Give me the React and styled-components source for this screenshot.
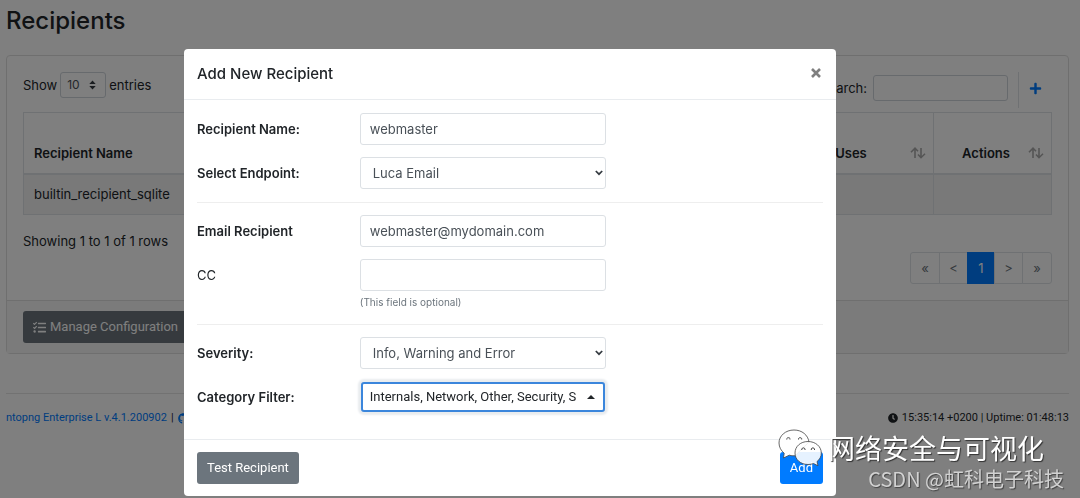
import React from "react";
import styled, { createGlobalStyle } from "styled-components";
import { FaTasks, FaClock, FaGithub, FaPlus } from "react-icons/fa";

const GlobalStyle = createGlobalStyle`
  * { box-sizing: border-box; }
  body {
    margin: 0;
    background: #fff;
    color: #212529;
    font-family: Inter, "Noto Sans CJK SC", sans-serif;
    font-size: 13px;
    line-height: 20px;
    overflow: hidden;
  }
  button, input, select { font-family: inherit; font-size: inherit; line-height: inherit; margin: 0; }
`;

const Page = styled.main`
  padding: 0 11px 0 6px;
`;

const PageTitle = styled.h1`
  margin: 0;
  padding: 7px 0 20px;
  font-size: 24px;
  font-weight: 500;
  line-height: 28px;
`;

const Card = styled.section`
  border: 1px solid #dfdfdf;
  border-radius: 4px;
`;

const CardBody = styled.div`
  padding: 16px;
`;

const CardFooter = styled.div`
  padding: 10px 16px;
  background: #f7f7f7;
  border-top: 1px solid #dfdfdf;
`;

const Toolbar = styled.div`
  display: flex;
  justify-content: space-between;
  align-items: flex-start;
  margin-bottom: 4px;
`;

const Length = styled.label`
  display: flex;
  gap: 3px;
  align-items: center;
`;

const LengthBox = styled.span`
  position: relative;
  svg {
    position: absolute;
    right: 10px;
    top: 8px;
    pointer-events: none;
  }
`;

const LengthSelect = styled.select`
  appearance: none;
  display: block;
  width: 46px;
  height: 26px;
  padding: 0 6px;
  border: 1px solid #ced4da;
  border-radius: 3px;
  background: #fff;
  color: #495057;
  font-size: 12px;
`;

const Tools = styled.div`
  display: flex;
  align-items: center;
  height: 36px;
`;

const Search = styled.label`
  display: flex;
  align-items: center;
  gap: 6px;
  padding-bottom: 4px;
`;

const SearchInput = styled.input`
  width: 135px;
  height: 26px;
  border: 1px solid #ced4da;
  border-radius: 3px;
`;

const PlusButton = styled.button`
  display: flex;
  align-items: center;
  height: 36px;
  margin-left: 10px;
  padding: 0 10px 4px;
  border: 0;
  border-left: 1px solid #dee2e6;
  background: none;
  color: #007bff;
`;

const Table = styled.table`
  width: 100%;
  table-layout: fixed;
  border-collapse: collapse;
  border: 1px solid #dee2e6;
`;

const Th = styled.th`
  width: ${(p) => p.$width || "auto"};
  height: 61px;
  padding: 20px 10px 0;
  border: 1px solid #dee2e6;
  border-bottom: 2px solid #dee2e6;
  font-weight: 600;
  text-align: left;
`;

const SortHead = styled.div`
  display: flex;
  align-items: center;
  justify-content: space-between;
  span { flex: 1; text-align: center; }
  svg { margin-right: -3px; }
`;

const Td = styled.td`
  height: 41px;
  padding: 0 10px;
  background: #f2f2f2;
  border: 1px solid #dee2e6;
`;

const TableInfo = styled.p`
  margin: 0;
  padding-top: 16px;
`;

const Pagination = styled.nav`
  display: flex;
  justify-content: flex-end;
  padding-top: 1px;
`;

const PageButton = styled.button`
  width: ${(p) => (p.$active ? "28px" : "29px")};
  height: 32px;
  margin-left: -1px;
  padding: 0;
  border: 1px solid ${(p) => (p.$active ? "#007bff" : "#dee2e6")};
  background: ${(p) => (p.$active ? "#007bff" : "#fff")};
  color: ${(p) => (p.$active ? "#fff" : "#6c757d")};
  &:first-child { width: 30px; border-radius: 3px 0 0 3px; }
  &:last-child { width: 30px; border-radius: 0 3px 3px 0; }
`;

const Button = styled.button`
  display: inline-flex;
  align-items: center;
  gap: 4px;
  height: 32px;
  padding: 0 10px;
  border: 0;
  border-radius: 3px;
  background: ${(p) => (p.$primary ? "#007bff" : "#6c757d")};
  color: #fff;
  font-family: Roboto, sans-serif;
  white-space: nowrap;
`;

const PageFooter = styled.footer`
  display: flex;
  justify-content: space-between;
  margin-top: 39px;
  padding-top: 14px;
  border-top: 1px solid #e5e5e5;
  font-family: Roboto, sans-serif;
  font-size: 11px;
  a { color: #007bff; text-decoration: none; }
  svg { display: block; }
`;

const Inline = styled.span`
  display: inline-flex;
  align-items: center;
  gap: 4px;
`;

const Backdrop = styled.div`
  position: fixed;
  inset: 0;
  display: flex;
  align-items: flex-start;
  justify-content: center;
  padding: 49px 60px 0 0;
  background: rgba(0, 0, 0, 0.5);
`;

const Dialog = styled.div`
  width: 652px;
  max-width: 100%;
  background: #fff;
  background-clip: padding-box;
  border-radius: 4px;
`;

const DialogHeader = styled.header`
  display: flex;
  align-items: center;
  justify-content: space-between;
  height: 51px;
  padding: 0 13px;
  border-bottom: 1px solid #e9ecef;
`;

const DialogTitle = styled.h2`
  margin: 0;
  font-size: 15px;
  font-weight: 500;
`;

const CloseButton = styled.button`
  display: flex;
  padding: 0 2px 2px;
  border: 0;
  background: none;
  color: #7f7f7f;
`;

const Form = styled.form`
  padding: 13px 13px 26px;
`;

const Row = styled.div`
  display: grid;
  grid-template-columns: 26% 246px;
  align-items: start;
  & + & { margin-top: 12px; }
`;

const Label = styled.label`
  line-height: 32px;
  font-weight: ${(p) => (p.$plain ? 400 : 600)};
`;

const Divider = styled.hr`
  margin: 13px 0 12px;
  border: 0;
  border-top: 1px solid #eee;
`;

const Input = styled.input`
  display: block;
  width: 100%;
  height: 32px;
  padding: 0 9px;
  border: 1px solid #dce0e4;
  border-radius: 3px;
  background: #fff;
  color: #495057;
`;

const SelectBox = styled.div`
  position: relative;
  svg {
    position: absolute;
    right: 3px;
    top: 13px;
    pointer-events: none;
  }
`;

const Select = styled(Input).attrs({ as: "select" })`
  appearance: none;
  padding: 0 12px;
`;

const Help = styled.small`
  display: block;
  padding: 3px 0 1px;
  color: #6c757d;
  font-size: 10px;
  line-height: 16px;
`;

const MultiFrame = styled.div`
  padding: 1px;
  border-radius: 4px;
  background: #e9ecef;
  box-shadow: 0 0 2px 2px #e9ecef;
`;

const MultiSelect = styled.button`
  display: flex;
  align-items: center;
  gap: 3px;
  width: 100%;
  height: 30px;
  padding: 0 8px 0 7px;
  border: 2px solid #3b86dc;
  border-radius: 3px;
  background: #fff;
  color: #212529;
  font-family: Roboto, sans-serif;
  span {
    flex: 1;
    overflow: hidden;
    white-space: nowrap;
    text-align: left;
  }
`;

const DialogFooter = styled.footer`
  display: flex;
  justify-content: space-between;
  padding: 12px 13px;
  border-top: 1px solid #e9ecef;
`;

const Watermark = styled.div`
  position: fixed;
  right: 16px;
  bottom: 8px;
  display: flex;
  flex-direction: column;
  align-items: flex-end;
  font-family: "Noto Sans CJK SC", sans-serif;
  white-space: nowrap;
  pointer-events: none;
`;

const Brand = styled.div`
  display: flex;
  align-items: center;
  gap: 6px;
  margin-right: 20px;
  color: #fff;
  font-size: 27px;
  line-height: 36px;
  text-shadow: 1px 1px 1px #333;
`;

const Credit = styled.div`
  color: #d2d2d2;
  font-size: 20px;
  line-height: 23px;
  text-shadow: 1px 1px 1px #444;
`;

const Sort = () => (
  <svg width="16" height="12" viewBox="0 0 16 12" fill="none" stroke="#aaa" strokeWidth="1.6">
    <path d="M5 11V1.5M1 5.2L5 1.2L8 4.2M11 1V10.5M8 7.5L11 10.7L15 6.8" />
  </svg>
);

const Chevron = () => (
  <svg width="8" height="6" viewBox="0 0 8 6" fill="none" stroke="#343a40" strokeWidth="1.7">
    <path d="M0.8 1L4 4.2L7.2 1" />
  </svg>
);

const WeChat = () => (
  <svg width="44" height="38" viewBox="0 0 44 38" stroke="#444" strokeWidth="0.8">
    <path fill="#fff" d="M16 1C7.500 1 1 6.800 1 14C1 18.200 3.200 21.800 6.200 24.200L5.500 29L11.200 26.200C13 26.700 15 27 17 26.800L31 13C30 6 24 1 16 1Z" />
    <path fill="#fff" fillOpacity="0.9" d="M30 12.500C22.500 12.500 17 17.500 17 24C17 30.500 22.500 35.500 30 35.500C32 35.500 34 35.100 35.500 34.500L40 36.800L39 32.500C41.800 30.500 43.300 27.500 43.300 24C43.300 17.500 37.500 12.500 30 12.500Z" />
    <g fill="none" stroke="#444" strokeWidth="1">
      <path d="M8.800 10.500V9.500A2 2 0 0 1 12 9.500V10.500" />
      <path d="M20.500 10.500V9.500A2 2 0 0 1 23.700 9.500V10.500" />
      <path d="M23.800 21V20A1.700 1.700 0 0 1 27 20V21" />
      <path d="M33.300 21V20A1.700 1.700 0 0 1 36.500 20V21" />
    </g>
  </svg>
);

function FormSelect({ id, value }) {
  return (
    <SelectBox>
      <Select id={id} defaultValue={value}>
        <option>{value}</option>
      </Select>
      <Chevron />
    </SelectBox>
  );
}

function RecipientsPage() {
  return (
    <Page>
      <PageTitle>Recipients</PageTitle>
      <Card>
        <CardBody>
          <Toolbar>
            <Length>
              Show
              <LengthBox>
                <LengthSelect defaultValue="10">
                  <option>10</option>
                </LengthSelect>
                <svg width="7" height="10" viewBox="0 0 7 10" fill="#343a40">
                  <path d="M3.500 0.500L6.700 4H0.300ZM3.500 9.500L0.300 6H6.700Z" />
                </svg>
              </LengthBox>
              entries
            </Length>
            <Tools>
              <Search>
                Search:
                <SearchInput type="search" />
              </Search>
              <PlusButton type="button" aria-label="Add">
                <FaPlus size={13} />
              </PlusButton>
            </Tools>
          </Toolbar>
          <Table>
            <thead>
              <tr>
                <Th>Recipient Name</Th>
                <Th $width="152px">
                  <SortHead><span>Uses</span><Sort /></SortHead>
                </Th>
                <Th $width="118px">
                  <SortHead><span>Actions</span><Sort /></SortHead>
                </Th>
              </tr>
            </thead>
            <tbody>
              <tr>
                <Td>builtin_recipient_sqlite</Td>
                <Td />
                <Td />
              </tr>
            </tbody>
          </Table>
          <TableInfo>Showing 1 to 1 of 1 rows</TableInfo>
          <Pagination>
            <PageButton>«</PageButton>
            <PageButton>&lt;</PageButton>
            <PageButton $active>1</PageButton>
            <PageButton>&gt;</PageButton>
            <PageButton>»</PageButton>
          </Pagination>
        </CardBody>
        <CardFooter>
          <Button type="button">
            <FaTasks size={13} /> Manage Configuration
          </Button>
        </CardFooter>
      </Card>
      <PageFooter>
        <Inline>
          <a href="#version">ntopng Enterprise L v.4.1.200902</a>|
          <a href="#github"><FaGithub size={11} /></a>
        </Inline>
        <Inline>
          <FaClock size={10} /> 15:35:14 +0200 | Uptime: 01:48:13
        </Inline>
      </PageFooter>
    </Page>
  );
}

function RecipientDialog() {
  return (
    <Backdrop>
      <Dialog role="dialog" aria-labelledby="dialog-title">
        <DialogHeader>
          <DialogTitle id="dialog-title">Add New Recipient</DialogTitle>
          <CloseButton type="button" aria-label="Close">
            <svg width="10" height="10" viewBox="0 0 10 10" stroke="currentColor" strokeWidth="2.600">
              <path d="M1 1L9 9M9 1L1 9" />
            </svg>
          </CloseButton>
        </DialogHeader>
        <Form>
          <Row>
            <Label htmlFor="name">Recipient Name:</Label>
            <Input id="name" defaultValue="webmaster" />
          </Row>
          <Row>
            <Label htmlFor="endpoint">Select Endpoint:</Label>
            <FormSelect id="endpoint" value="Luca Email" />
          </Row>
          <Divider />
          <Row>
            <Label htmlFor="email">Email Recipient</Label>
            <Input id="email" defaultValue="webmaster@mydomain.com" />
          </Row>
          <Row>
            <Label htmlFor="cc" $plain>CC</Label>
            <div>
              <Input id="cc" />
              <Help>(This field is optional)</Help>
            </div>
          </Row>
          <Divider />
          <Row>
            <Label htmlFor="severity">Severity:</Label>
            <FormSelect id="severity" value="Info, Warning and Error" />
          </Row>
          <Row>
            <Label htmlFor="category">Category Filter:</Label>
            <MultiFrame>
              <MultiSelect id="category" type="button" aria-haspopup="listbox">
                <span>Internals, Network, Other, Security, S</span>
                <svg width="8" height="4" viewBox="0 0 8 4" fill="#212529">
                  <path d="M4 0L8 4H0Z" />
                </svg>
              </MultiSelect>
            </MultiFrame>
          </Row>
        </Form>
        <DialogFooter>
          <Button type="button">Test Recipient</Button>
          <Button type="submit" $primary>Add</Button>
        </DialogFooter>
      </Dialog>
    </Backdrop>
  );
}

export default function App() {
  return (
    <>
      <GlobalStyle />
      <RecipientsPage />
      <RecipientDialog />
      <Watermark>
        <Brand><WeChat />网络安全与可视化</Brand>
        <Credit>CSDN @虹科电子科技</Credit>
      </Watermark>
    </>
  );
}
